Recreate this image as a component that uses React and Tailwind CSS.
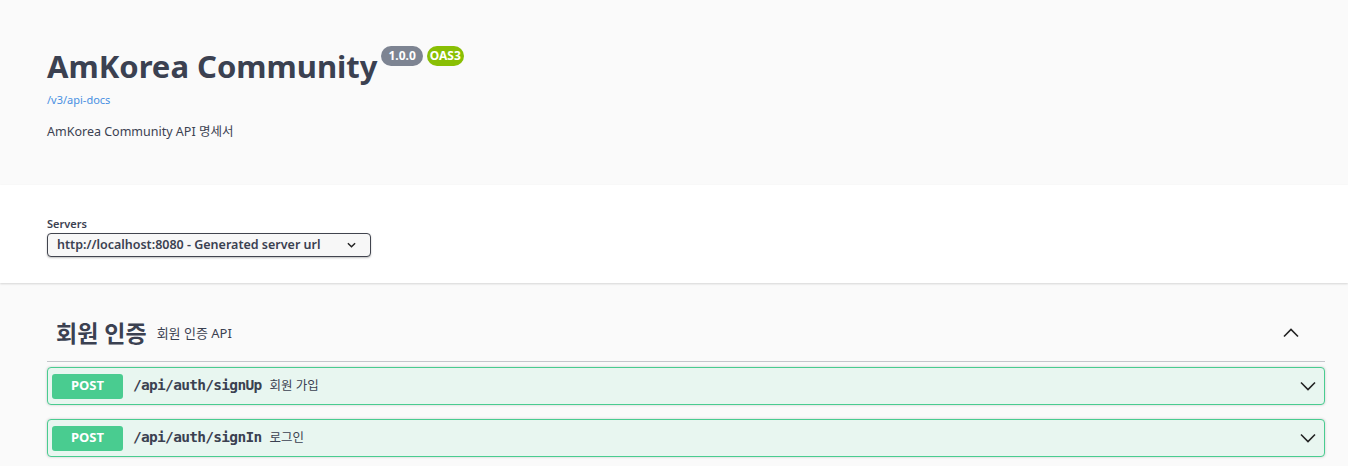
import React from 'react';

const sans = { fontFamily: '"Noto Sans", "Noto Sans CJK KR", sans-serif' };

function Chevron({ up = false, className = '' }) {
  return (
    <svg viewBox="0 0 20 20" className={className} fill="none" stroke="currentColor" strokeWidth="1.6">
      {up ? <polyline points="3,13.5 10,6.5 17,13.5" /> : <polyline points="3,6.5 10,13.5 17,6.5" />}
    </svg>
  );
}

function OpBlock({ path, summary }) {
  return (
    <div className="w-[1278px] h-[38px] border border-[#49cc90] bg-[#e8f6f0] rounded-[4px] flex items-center px-[4px] shadow-[0_0_3px_rgba(0,0,0,0.19)]">
      <div className="w-[71px] h-[25px] bg-[#49cc90] rounded-[3px] flex items-center justify-center text-white text-[13px] font-bold">
        POST
      </div>
      <span className="ml-[10px] text-[14.5px] font-bold text-[#3b4151]" style={{ fontFamily: '"DejaVu Sans Mono", monospace', letterSpacing: '-0.7px' }}>
        {path}
      </span>
      <span className="ml-[8px] text-[12.5px] text-[#3b4151]">{summary}</span>
      <Chevron className="w-[20px] h-[20px] ml-auto mr-[2px] text-[#222]" />
    </div>
  );
}

export default function App() {
  return (
    <div className="w-[1348px] h-[466px] bg-[#fafafa] overflow-hidden" style={sans}>
      {/* Info */}
      <div className="h-[185px] pl-[47px] pt-[44px]">
        <div className="flex items-start">
          <h1 className="text-[31px] leading-[44px] font-bold text-[#3b4151]">AmKorea Community</h1>
          <span className="ml-[4px] mt-[2px] h-[20px] px-[7px] rounded-full bg-[#7d8492] text-white text-[12px] font-bold flex items-center">1.0.0</span>
          <span className="ml-[4px] mt-[2px] h-[20px] px-[3px] rounded-full bg-[#89bf04] text-white text-[12px] font-bold flex items-center">OAS3</span>
        </div>
        <div className="mt-[4px] text-[11px] text-[#4990e2]">/v3/api-docs</div>
        <div className="mt-[14px] text-[12.5px] text-[#3b4151]">AmKorea Community API 명세서</div>
      </div>

      {/* Servers */}
      <div className="h-[98px] bg-white shadow-[0_1px_2px_0_rgba(0,0,0,0.15)] pl-[47px] pt-[32px] relative">
        <div className="text-[11px] font-semibold text-[#3b4151] leading-[14px]">Servers</div>
        <div className="mt-[2px] w-[324px] h-[24px] border border-[#41444e] rounded-[4px] shadow-[0_1px_2px_0_rgba(0,0,0,0.25)] bg-[#f7f7f7] flex items-center pl-[9px] pr-[14px]">
          <span className="text-[12.5px] font-semibold text-[#3b4151]">http://localhost:8080 - Generated server url</span>
          <svg viewBox="0 0 10 6" className="w-[9px] h-[6px] ml-auto" fill="none" stroke="#222" strokeWidth="1.6">
            <polyline points="1,1 5,5 9,1" />
          </svg>
        </div>
      </div>

      {/* Tag section */}
      <div className="pl-[47px] pt-[30px]">
        <div className="w-[1278px] h-[49px] border-b border-[#c4c6cb] flex items-center pl-[9px] pb-[8px]">
          <span className="text-[23px] font-bold text-[#3b4151]">회원 인증</span>
          <span className="ml-[10px] text-[13px] text-[#3b4151] mt-[2px]">회원 인증 API</span>
          <Chevron up className="w-[20px] h-[20px] ml-auto mr-[24px] text-[#222]" />
        </div>
        <div className="mt-[5px] flex flex-col gap-[14px]">
          <OpBlock path="/api/auth/signUp" summary="회원 가입" />
          <OpBlock path="/api/auth/signIn" summary="로그인" />
        </div>
      </div>
    </div>
  );
}
